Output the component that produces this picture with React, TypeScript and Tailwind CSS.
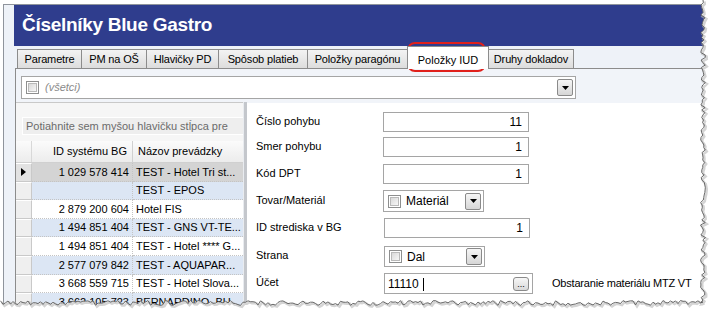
import React, { useMemo } from "react";

const FONT = { fontFamily: '"Liberation Sans", Arial, sans-serif' };

function Checkbox() {
  return (
    <span className="inline-flex w-[13px] h-[13px] border border-[#8e8f8f] bg-white p-[1px] shrink-0">
      <span className="block w-full h-full border border-[#b9b9b9] bg-gradient-to-br from-[#d9d9d9] to-[#f7f7f7]" />
    </span>
  );
}

function DropBtn({ w = 16, h = 17 }: { w?: number; h?: number }) {
  return (
    <span
      className="flex items-center justify-center border border-[#8a8a8a] rounded-[2px] bg-gradient-to-b from-[#f6f6f6] to-[#d6d6d6] shrink-0"
      style={{ width: w, height: h }}
    >
      <svg width="7" height="4" viewBox="0 0 7 4">
        <path d="M0 0 H7 L3.5 4 Z" fill="#000" />
      </svg>
    </span>
  );
}

const tabs: { label: string; w: number; active?: boolean }[] = [
  { label: "Parametre", w: 65 },
  { label: "PM na OŠ", w: 66 },
  { label: "Hlavičky PD", w: 73 },
  { label: "Spôsob platieb", w: 90 },
  { label: "Položky paragónu", w: 101 },
  { label: "Položky IUD", w: 82, active: true },
  { label: "Druhy dokladov", w: 86 },
];

const rows: { id: string; name: string; bg: string; sel?: boolean }[] = [
  { id: "1 029 578 414", name: "TEST - Hotel Tri st...", bg: "bg-[#d4d4d4]", sel: true },
  { id: "", name: "TEST - EPOS", bg: "bg-[#dce6f4]" },
  { id: "2 879 200 604", name: "Hotel FIS", bg: "bg-white" },
  { id: "1 494 851 404", name: "TEST - GNS VT-TE...", bg: "bg-[#dce6f4]" },
  { id: "1 494 851 404", name: "TEST - Hotel **** G...", bg: "bg-white" },
  { id: "2 577 079 842", name: "TEST  - AQUAPAR...", bg: "bg-[#dce6f4]" },
  { id: "3 668 559 715", name: "TEST - Hotel  Slova...", bg: "bg-white" },
  { id: "3 662 105 723", name: "BERNARDINO_BU...", bg: "bg-[#dce6f4]" },
];

function TextInput({ value, w = 146 }: { value: string; w?: number }) {
  return (
    <div
      className="h-[20px] border border-[#a5a5a5] bg-white flex items-center justify-end pr-[6px] text-[12px] text-black"
      style={{ width: w }}
    >
      {value}
    </div>
  );
}

function ComboCheck({ label, h = 22 }: { label: string; h?: number }) {
  return (
    <div
      className="w-[101px] border border-[#a5a5a5] bg-white flex items-center pl-[4px] pr-[2px]"
      style={{ height: h }}
    >
      <Checkbox />
      <span className="ml-[5px] text-[12px] text-black flex-1">{label}</span>
      <DropBtn />
    </div>
  );
}

function FormRow({ label, children, mt }: { label: string; children: React.ReactNode; mt: number }) {
  return (
    <div className="flex items-center" style={{ marginTop: mt }}>
      <div className="w-[127px] text-[11px] text-black -mt-[2px]">{label}</div>
      {children}
    </div>
  );
}

function TornEdge() {
  const d = useMemo(() => {
    let s = 7;
    const rnd = () => {
      s = (s * 9301 + 49297) % 233280;
      return s / 233280;
    };
    const pts: [number, number][] = [];
    for (let y = 0; y <= 303; y += 2.5) pts.push([703 + (rnd() - 0.5) * 5, y]);
    for (let x = 703; x >= 0; x -= 2.5) pts.push([x, 303 + (rnd() - 0.5) * 5]);
    const line = pts.map((p, i) => `${i === 0 ? "M" : "L"}${p[0].toFixed(1)} ${p[1].toFixed(1)}`).join(" ");
    const fill = `M715 0 L${pts.map((p) => `${p[0].toFixed(1)} ${p[1].toFixed(1)}`).join(" L")} L0 323 L715 323 Z`;
    return { line, fill };
  }, []);
  return (
    <svg className="absolute left-0 top-0 pointer-events-none" width="715" height="323" viewBox="0 0 715 323">
      <path d={d.fill} fill="#ffffff" />
      <path d={d.line} fill="none" stroke="#b8b8b8" strokeWidth="2.5" transform="translate(1.5 1.5)" opacity="0.6" />
      <path d={d.line} fill="none" stroke="#5a5a5a" strokeWidth="0.9" />
    </svg>
  );
}

export default function App() {
  return (
    <div className="relative w-[715px] h-[323px] bg-white overflow-hidden" style={FONT}>
      <div className="ml-[3px] mt-[4px] w-[712px] h-[319px] border-l border-t border-[#8f949c] bg-[#eef2f8] pl-[10px] flex flex-col">
        {/* Title */}
        <div className="h-[41px] bg-[#2f3d8d] flex items-center pl-[8px] shrink-0">
          <span className="text-white font-bold text-[19px] tracking-[-0.3px] -mt-[1px]">Číselníky Blue Gastro</span>
        </div>

        {/* Tabs */}
        <div className="h-[23px] shrink-0 flex items-end pl-[2px] border-b border-[#8c8c8c] ml-[1px]">
          {tabs.map((t, i) =>
            t.active ? (
              <div
                key={i}
                className="relative z-10 h-[23px] -mb-px -ml-px border border-b-0 border-[#8c8c8c] bg-white flex items-start justify-center pt-[5px] text-[11px] text-black"
                style={{ width: t.w }}
              >
                {t.label}
              </div>
            ) : (
              <div
                key={i}
                className={`h-[19px] ${i === 0 ? "" : "-ml-px"} border border-b-0 border-[#8c8c8c] bg-gradient-to-b from-[#f3f3f3] to-[#dddddd] flex items-center justify-center text-[11px] text-black tracking-[-0.15px]`}
                style={{ width: t.w }}
              >
                {t.label}
              </div>
            )
          )}
        </div>

        {/* Content */}
        <div className="flex-1 ml-[1px] border-l border-[#8c8c8c] bg-[#f1f4f9] flex flex-col">
          <div className="mt-[7px] ml-[5px] w-[555px] h-[23px] border border-[#a5a5a5] bg-white flex items-center pl-[4px] pr-[2px] shrink-0">
            <Checkbox />
            <span className="ml-[6px] italic text-[11px] text-[#8a8a8a] flex-1">(všetci)</span>
            <DropBtn />
          </div>

          <div className="mt-[3px] flex flex-1">
            {/* Left grid */}
            <div className="w-[227px] shrink-0 border-t border-[#c9c9c9] bg-[#f6f6f6] flex flex-col overflow-hidden">
              <div className="h-[38px] shrink-0 pt-[14px] pl-[6px]">
                <div className="h-[18px] border-t border-l border-white border-b border-[#e2e2e2] bg-[#eeeeee] flex items-center pl-[3px] text-[11px] text-[#6b6b6b] whitespace-nowrap overflow-hidden">
                  Potiahnite sem myšou hlavičku stĺpca pre
                </div>
              </div>
              <div className="h-[22px] shrink-0 flex border-b border-[#d0d0d0] bg-gradient-to-b from-[#fbfbfb] to-[#ececec] text-[11px] text-black">
                <div className="w-[16px] border-r border-[#d8d8d8]" />
                <div className="w-[101px] border-r border-[#d0d0d0] flex items-center justify-end pr-[5px] whitespace-nowrap">ID systému BG</div>
                <div className="flex-1 flex items-center pl-[5px] whitespace-nowrap overflow-hidden">Názov prevádzky</div>
              </div>
              {rows.map((r, i) => (
                <div key={i} className="h-[18.6px] shrink-0 flex text-[11px] text-black whitespace-nowrap">
                  <div className={`w-[16px] border-r border-b border-[#c9c9c9] border-t border-t-white ${r.sel ? "bg-[#e2e2e2]" : "bg-[#efefef]"} flex items-center justify-center`}>
                    {r.sel && (
                      <svg width="5" height="8" viewBox="0 0 5 8">
                        <path d="M0 0 L5 4 L0 8 Z" fill="#000" />
                      </svg>
                    )}
                  </div>
                  <div className={`w-[101px] ${r.bg} border-r border-b border-dotted border-[#c4c4c4] flex items-center justify-end pr-[3px]`}>{r.id}</div>
                  <div className={`flex-1 ${r.bg} border-b border-dotted border-[#c4c4c4] flex items-center pl-[3px] overflow-hidden`}>{r.name}</div>
                </div>
              ))}
            </div>

            {/* Splitter */}
            <div className="w-[4px] shrink-0 bg-[#c4c7cc] border-l border-[#e9ecf0]" />

            {/* Right form */}
            <div className="flex-1 mt-[1px] bg-white pl-[9px] pt-[9px]">
              <FormRow label="Číslo pohybu" mt={0}>
                <TextInput value="11" />
              </FormRow>
              <FormRow label="Smer pohybu" mt={5}>
                <TextInput value="1" />
              </FormRow>
              <FormRow label="Kód DPT" mt={7}>
                <TextInput value="1" />
              </FormRow>
              <FormRow label="Tovar/Materiál" mt={6}>
                <ComboCheck label="Materiál" />
              </FormRow>
              <FormRow label="ID strediska v BG" mt={6}>
                <div className="ml-[1px]">
                  <TextInput value="1" />
                </div>
              </FormRow>
              <FormRow label="Strana" mt={8}>
                <div className="ml-[1px]">
                  <ComboCheck label="Dal" h={21} />
                </div>
              </FormRow>
              <FormRow label="Účet" mt={6}>
                <div className="ml-[1px] w-[149px] h-[21px] border border-[#a5a5a5] bg-white flex items-center pl-[3px] pr-[3px] text-[12px] text-black">
                  <span className="flex-1">
                    11110 <span className="inline-block w-px h-[13px] bg-black align-middle ml-[1px]" />
                  </span>
                  <span className="w-[16px] h-[14px] border border-[#8a8a8a] rounded-[3px] bg-gradient-to-b from-[#f7f7f7] to-[#d9d9d9] flex items-end justify-center text-[9px] leading-[9px] pb-[1px]">
                    ...
                  </span>
                </div>
                <span className="ml-[19px] text-[11px] text-black whitespace-nowrap tracking-[-0.2px]">Obstaranie materiálu MTZ VT</span>
              </FormRow>
            </div>
          </div>
        </div>
      </div>

      {/* Red highlight around active tab */}
      <div className="absolute left-[407px] top-[42px] w-[79px] h-[30px] border-[2.5px] border-[#e0201b] rounded-[8px] pointer-events-none" />

      <TornEdge />
    </div>
  );
}
